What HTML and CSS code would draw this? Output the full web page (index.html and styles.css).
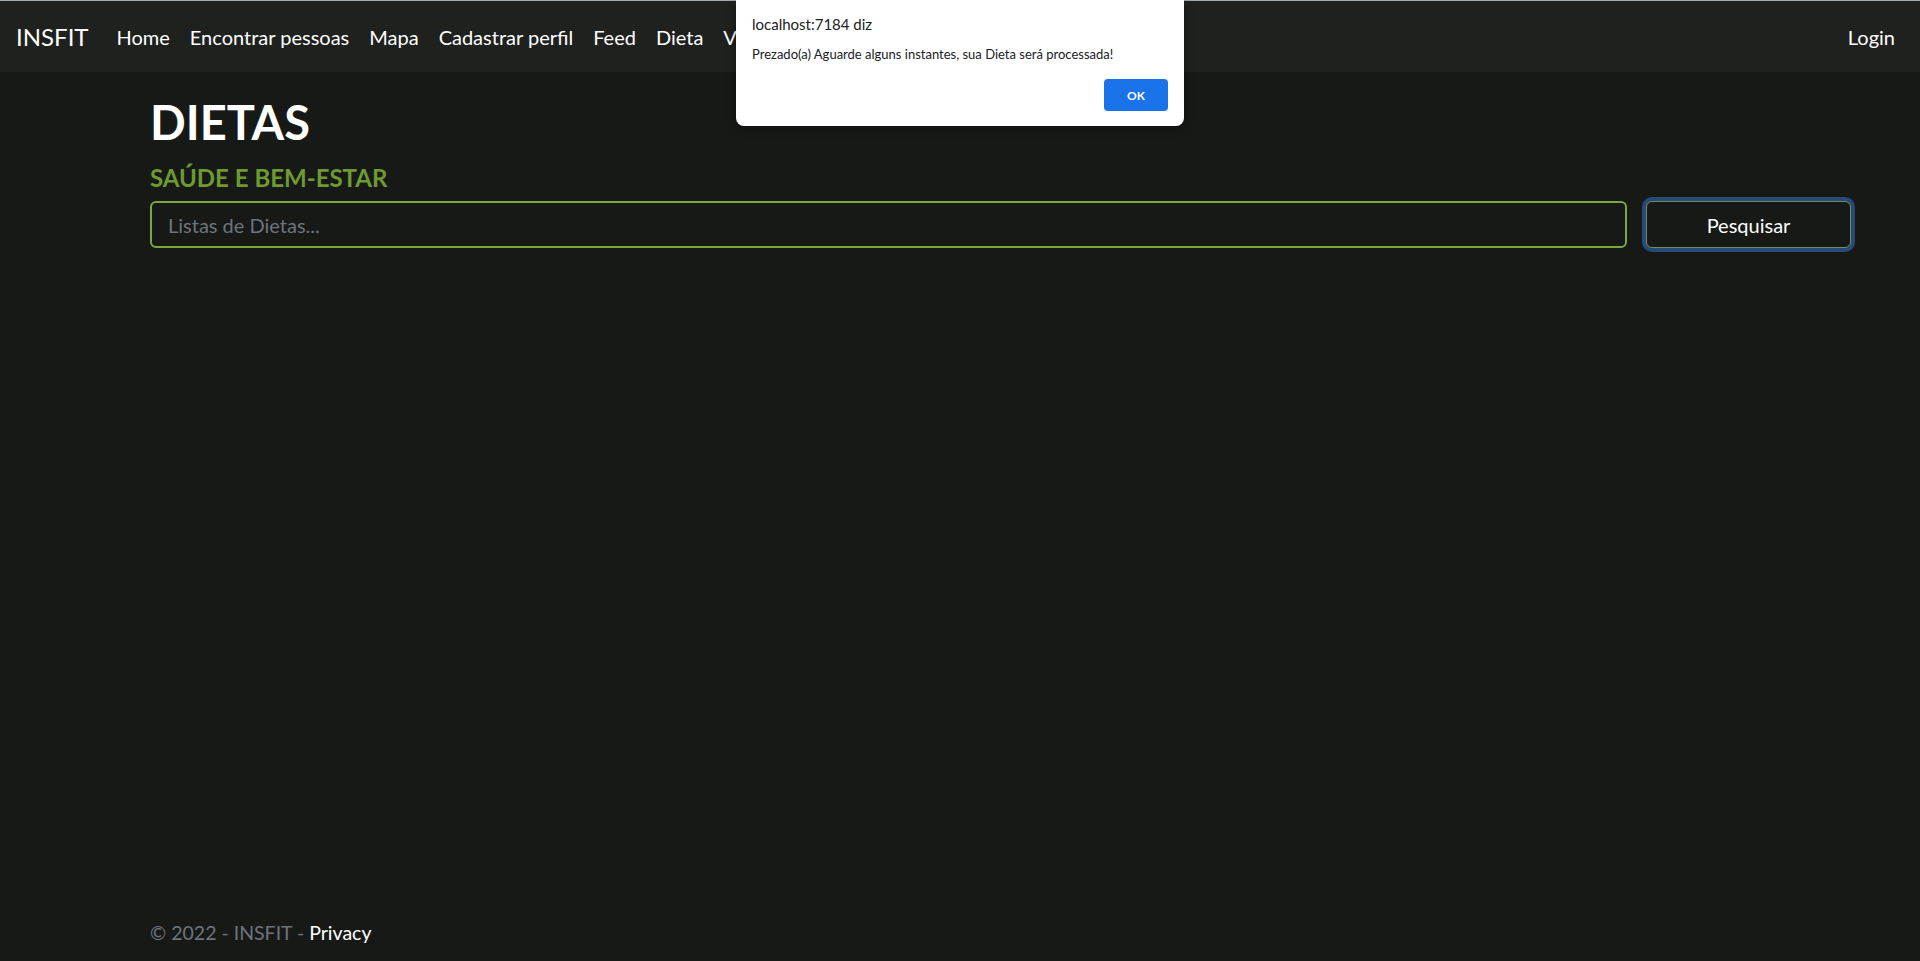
FILE: index.html
```html
<!DOCTYPE html>
<html lang="pt-br">
<head>
<meta charset="utf-8">
<title>Dietas - INSFIT</title>
<link rel="stylesheet" href="styles.css">
</head>
<body>
<header class="navbar">
  <a class="brand" href="#">INSFIT</a>
  <nav class="nav-links">
    <a href="#">Home</a>
    <a href="#">Encontrar pessoas</a>
    <a href="#">Mapa</a>
    <a href="#">Cadastrar perfil</a>
    <a href="#">Feed</a>
    <a href="#">Dieta</a>
    <a href="#">Vídeos</a>
  </nav>
  <a class="login" href="#">Login</a>
</header>

<main class="content">
  <h1 class="title">DIETAS</h1>
  <h2 class="subtitle">SAÚDE E BEM-ESTAR</h2>
  <form class="search">
    <input class="search-input" type="text" placeholder="Listas de Dietas...">
    <button class="search-btn" type="button">Pesquisar</button>
  </form>
</main>

<footer class="footer">
  &copy; 2022 - INSFIT - <a href="#">Privacy</a>
</footer>

<div class="dialog">
  <div class="dialog-title">localhost:7184 diz</div>
  <div class="dialog-msg">Prezado(a) Aguarde alguns instantes, sua Dieta será processada!</div>
  <div class="dialog-actions"><button class="dialog-ok" type="button">OK</button></div>
</div>
</body>
</html>
```

FILE: styles.css
```css
* { box-sizing: border-box; }
html, body { margin: 0; padding: 0; }
body {
  min-height: 100vh;
  display: flex;
  flex-direction: column;
  background: #171917;
  color: #fff;
  font-family: Lato, "Open Sans", sans-serif;
  overflow: hidden;
}
a { color: #fff; text-decoration: none; }

.navbar {
  height: 72px;
  border-top: 1px solid #9db0b0;
  background: #1e211e;
  display: flex;
  align-items: center;
  padding: 0 25px 0 16px;
}
.brand {
  font-size: 24px;
  margin-right: 18px;
}
.nav-links {
  display: flex;
  flex: 1;
}
.nav-links a {
  font-size: 20px;
  padding: 0 10px;
}
.login { font-size: 20px; }

.content {
  flex: 1;
  padding: 0 69px 0 150px;
}
.title {
  margin: 22px 0 0;
  font-size: 47px;
  font-weight: 700;
  line-height: 1.2;
}
.subtitle {
  margin: 14px 0 0;
  font-size: 24px;
  font-weight: 700;
  color: #6f9a31;
  line-height: 1.2;
}
.search {
  display: flex;
  gap: 19px;
  margin-top: 8px;
}
.search-input {
  flex: 1;
  height: 47px;
  background: #171917;
  border: 2px solid #7ea63e;
  border-radius: 6px;
  padding: 0 16px;
  font-family: inherit;
  font-size: 20px;
  color: #fff;
  outline: none;
}
.search-input::placeholder { color: #6c757d; }
.search-btn {
  width: 205px;
  height: 47px;
  background: #171917;
  border: 1px solid #6e9060;
  border-radius: 6px;
  box-shadow: 0 0 0 4px #274a76;
  color: #fff;
  font-family: inherit;
  font-size: 20px;
}

.footer {
  padding: 0 150px;
  line-height: 30px;
  margin-bottom: 13px;
  font-size: 19.5px;
  color: #6c757d;
}

.dialog {
  position: absolute;
  top: 0;
  left: 736px;
  width: 448px;
  height: 126px;
  background: #fff;
  border-radius: 0 0 8px 8px;
  box-shadow: 0 2px 10px rgba(0,0,0,0.35);
  color: #202124;
  padding: 14px 16px 0 16px;
}
.dialog-title {
  font-size: 15px;
  line-height: 20px;
}
.dialog-msg {
  margin-top: 12px;
  font-size: 13px;
  line-height: 16px;
}
.dialog-actions {
  display: flex;
  justify-content: flex-end;
  margin-top: 17px;
}
.dialog-ok {
  width: 64px;
  height: 32px;
  background: #1a73e8;
  border: none;
  border-radius: 4px;
  color: #fff;
  font-family: inherit;
  font-weight: 700;
  font-size: 12px;
}
```
